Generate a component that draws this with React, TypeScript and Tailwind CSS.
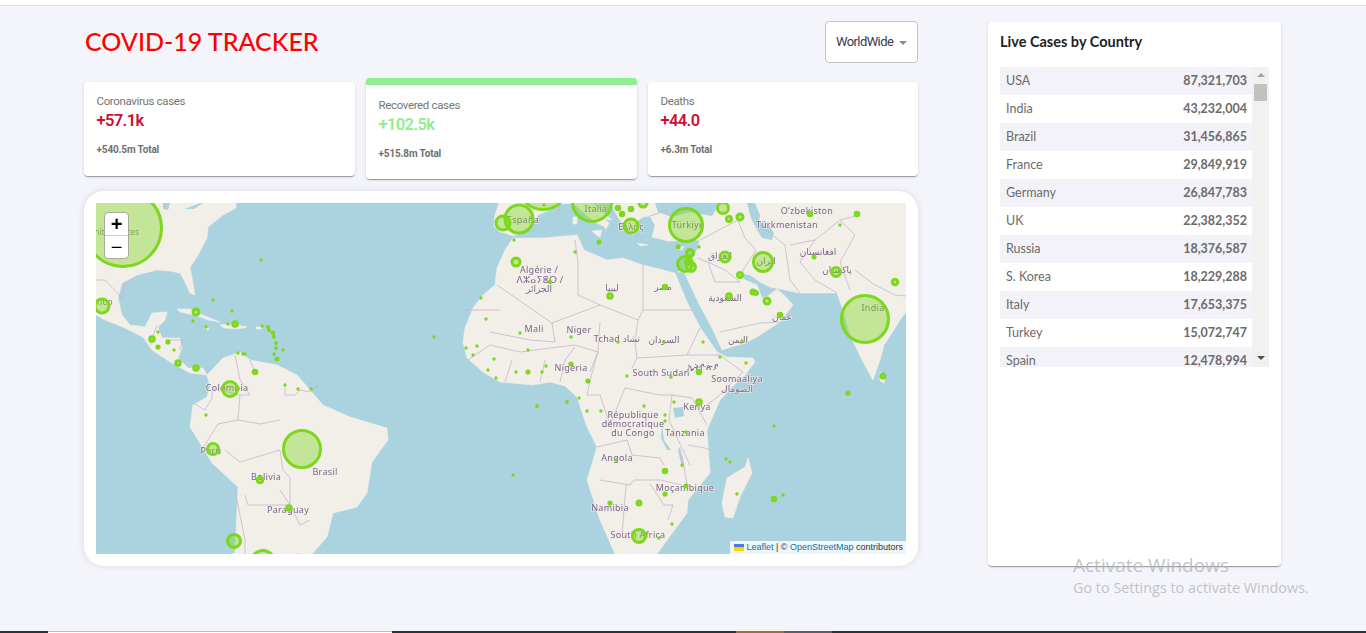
import React from "react";

const cardShadow = "shadow-[0_2px_1px_-1px_rgba(0,0,0,0.2),0_1px_1px_0_rgba(0,0,0,0.14),0_1px_3px_0_rgba(0,0,0,0.12)]";

const rows: [string, string][] = [
  ["USA", "87,321,703"], ["India", "43,232,004"], ["Brazil", "31,456,865"], ["France", "29,849,919"],
  ["Germany", "26,847,783"], ["UK", "22,382,352"], ["Russia", "18,376,587"], ["S. Korea", "18,229,288"],
  ["Italy", "17,653,375"], ["Turkey", "15,072,747"], ["Spain", "12,478,994"],
];

// x, y, outer radius
const rings: [number, number, number][] = [
  [123,228,40],[102,306,8.5],[196,312,4.5],[235,324,3.8],[152,339,3.8],[178,363,3.8],[196,368,3.8],[255,372,3.3],
  [230,389,9],[213,449,7],[302,449,20],[260,480,4.3],[289,508,3.8],[234,541,8],[263,562,13],[298,558,4.5],
  [503,223,8.5],[519,219,15.5],[543,184,27],[592,202,21],[631,226,8.5],[618,208,3.3],[622,214,3.3],[631,209,3.3],[643,203,5.5],[627,199,4],
  [516,262,5.5],[610,296,3.8],[665,287,3.3],[686,225,18],[690,253,5],[685,264,9],[688,262,4],[691,267,6],
  [723,208,7],[729,219,4],[740,217,4.5],[725,257,6.5],[763,262,11],[740,275,4],[753,292,3.5],[756,293,3],[767,301,4.5],[729,296,3.8],[780,315,3.3],
  [810,214,3.3],[857,214,3.3],[836,272,6],[895,282,4.3],[865,319,25],[883,376,3.5],[699,372,3.3],[699,402,3.8],[665,471,3.3],[639,503,3.5],[639,536,8],[774,499,3.3],
];

const dots: [number, number, number][] = [
  [261,260,1.7],[213,300,1.7],[232,311,1.7],[193,321,1.7],[206,327,1.7],[228,324,1.7],[158,332,1.7],[174,350,1.7],[168,342,2.6],[158,347,2.6],
  [262,326,1.8],[268,327,2],[269,330,2],[273,333,2.4],[274,337,1.9],[276,343,1.9],[276,348,1.9],[283,350,1.7],[274,354,1.7],[277,359,2.6],
  [238,353,1.7],[243,354,1.8],[245,354,1.8],[434,337,1.7],[481,298,1.7],[486,319,1.7],[466,348,1.7],[477,346,1.7],[473,355,1.7],[494,359,1.7],[488,370,1.7],[496,378,1.7],
  [285,385,1.7],[298,389,1.7],[311,389,1.7],[206,415,1.7],[514,240,1.7],[575,252,1.7],[599,242,2.6],[550,282,2.2],[544,205,1.7],
  [678,247,2.5],[699,247,1.7],[840,225,1.7],[814,257,2.5],[520,333,1.7],[571,337,1.7],[618,342,1.7],[664,342,1.7],[703,342,1.7],[742,341,1.7],
  [528,350,1.7],[516,372,1.7],[528,372,2.6],[542,372,1.7],[546,366,1.7],[571,364,2.6],[588,381,2.6],[627,376,1.7],[671,377,1.7],[720,357,1.7],[746,363,1.7],
  [848,393,2.6],[774,426,1.7],[537,406,1.9],[567,402,1.9],[579,398,1.7],[587,411,1.7],[601,411,1.7],[644,406,1.7],[674,402,1.7],[665,415,1.7],[665,421,1.7],[686,432,1.7],
  [616,460,1.7],[682,465,1.7],[686,486,2.6],[665,494,2.6],[610,503,2.6],[672,524,1.7],[659,538,1.7],[783,495,1.7],[737,494,1.7],[726,459,1.7],[730,462,1.7],[513,475,1.7],
];

const labels: [string, number, number][] = [
  ["Colombia",227,389],["Perú",211,452],["Bolivia",266,478],["Paraguay",288,511],["Brasil",325,473],
  ["Algérie /",539,271],["ⴷⵣⴰⵢⴻⵔ /",540,281],["الجزائر",539,290],["ليبيا",612,289],["مصر",663,288],["السعودية",725,299],
  ["العراق",720,257],["ایران",766,262],["افغانستان",818,253],["پاکستان",837,271],["عمان",782,318],["اليمن",738,341],
  ["India",873,309],["Türkiye",688,226],["Ελλάς",631,228],["España",523,221],["Italia",596,210],
  ["O‘zbekiston",807,212],["Türkmenistan",787,226],["Mali",534,330],["Niger",579,331],["Tchad تشاد",617,340],["السودان",664,341],
  ["Nigeria",571,369],["South Sudan",661,374],["ኢትዮጵያ",703,368],["Soomaaliya",737,380],["الصومال",737,390],["Kenya",697,408],
  ["République",633,416],["démocratique",633,425],["du Congo",633,434],["Tanzania",685,434],["Angola",617,459],
  ["Moçambique",685,489],["Namibia",610,509],["South Africa",638,536],
];

const land = [
  "M96 203L236 203L236 208L223 215L208 227L207 238L197 257L190 267L192 278L195 295L190 293L185 282L180 273L170 271L157 270L137 275L122 283L118 298L122 315L130 325L145 327L152 313L167 312L165 320L158 327L162 338L180 338L182 348L178 358L188 368L203 368L207 375L210 387L207 397L193 405L190 427L203 448L212 463L238 487L235 553L232 554L312 554L327 537L333 513L357 507L367 493L372 462L388 440L387 428L350 417L323 405L297 375L277 365L250 360L240 352L223 358L207 375L190 373L170 362L152 350L143 337L125 328L105 320L96 315Z",
  "M513 238L543 238L577 235L584 250L607 260L623 258L643 265L675 273L687 302L700 327L717 352L727 357L753 358L755 362L745 375L733 386L720 400L707 430L710 473L688 500L687 513L657 554L615 554L600 520L587 480L590 470L597 447L587 427L577 397L565 386L550 382L533 385L500 382L483 372L467 358L463 342L465 328L473 308L483 295L495 285L497 268L505 250Z",
  "M499 203L495 215L494 226L500 232L505 233L513 236L527 231L533 224L538 215L550 210L560 204L573 203L585 214L595 222L603 226L606 229L609 223L604 219L612 220L600 210L592 203L610 203L618 217L625 228L632 235L637 232L636 222L643 217L650 216L655 225L652 237L668 241L680 241L700 240L697 250L693 258L688 268L678 272L684 272L700 306L713 330L722 350L745 343L757 337L780 322L793 305L785 296L777 289L768 296L762 298L757 285L745 280L738 272L750 275L760 282L770 287L785 290L800 293L820 293L837 293L843 310L850 335L862 360L873 380L880 360L884 345L892 333L900 320L906 312L906 203Z",
  "M748 458L752 473L740 497L733 518L725 517L722 503L727 478L745 467Z",
  "M177 309L190 309L205 316L220 322L208 320L195 315L180 312Z",
  "M220 325L233 324L247 327L238 329L224 328Z",
  "M592 231L602 230L600 237L596 235Z","M573 217L577 217L577 224L573 224Z","M637 243L648 245L640 246Z","M676 249L684 246L682 250Z",
  "M204 328L209 328L208 330Z","M256 327L262 327L261 329L256 329Z","M880 372L885 377L884 383L880 381Z",
];

const water = [
  "M655 203L658 212L672 217L690 212L712 216L720 203Z",
  "M747 203L755 203L760 215L759 222L767 222L774 233L772 240L762 238L756 228L751 218Z",
  "M163 203L170 203L168 210L163 209Z","M184 209L190 207L200 203L203 203L194 209Z",
  "M673 408L683 407L684 416L675 418Z","M662 425L664 440L671 450L667 450L661 438Z","M680 447L684 466L682 468L678 450Z",
];

const borders = [
  "M497 285L552 323L600 305L578 295L578 262L575 240","M600 305L638 320L643 310L643 263","M643 310L693 310","M638 320L635 342L637 358L632 368",
  "M600 322L598 352L590 372","M552 323L555 342L530 340L490 332","M637 358L687 355L700 328","M687 355L720 355L743 372L720 395L707 405",
  "M720 332L760 323L780 322","M740 282L725 270L708 262L697 258","M708 262L715 282L740 282","M740 275L756 250L745 238L738 220L700 240",
  "M760 225L785 245L790 280L800 293","M790 245L815 240L840 220L860 215","M815 240L800 262L815 280L837 293","M840 220L855 235L840 262L850 290",
  "M855 270L875 285L895 295L906 296","M500 310L463 310","M468 360L490 345L520 352L550 348L575 345L598 352","M505 382L512 360","M540 382L545 360",
  "M560 382L565 360L575 347","M598 352L590 380L587 395L600 395L610 425","M610 425L625 388L660 395L672 395","M672 395L669 420L678 440L690 465","M672 395L692 398L707 425",
  "M597 447L627 440L632 455L660 458L664 465","M600 480L630 485L634 480L660 480L682 485","M626 485L622 535","M650 484L664 505L673 505L668 520","M688 445L705 448L710 450","M682 455L688 490",
  "M193 403L205 410L212 398L212 388","M212 388L240 395L250 395L240 380L235 355","M240 395L238 420L260 424L280 420","M203 448L218 424L238 420","M225 450L240 462L280 450L283 470L290 478L290 505",
  "M245 495L248 505L290 505L300 525L310 520","M235 490L245 540L245 554","M285 385L285 395L295 395L300 390L310 392L318 385","M255 372L250 360","M290 505L280 490",
  "M96 280L105 280L122 298L125 283","M157 325L150 345","M165 340L182 340L180 350","M558 215L560 203","M610 203L620 203","M650 216L668 210",
];

function MapArt() {
  return (
    <svg viewBox="96 203 810 351" className="block h-full w-full">
      <rect x="96" y="203" width="810" height="351" fill="#aad3df" />
      <g className="blur-[0.5px]">
        {land.map((d, i) => <path key={i} d={d} fill="#f2efe9" stroke="#f2efe9" strokeWidth="0.6" strokeLinejoin="round" />)}
        {water.map((d, i) => <path key={i} d={d} fill="#aad3df" />)}
        {borders.map((d, i) => <path key={i} d={d} fill="none" stroke="#c6b4cc" strokeWidth="0.8" />)}
        <text x="139" y="233" textAnchor="end" dominantBaseline="middle" fontSize="8" fill="#8a7d8c" fontFamily='"Noto Sans","DejaVu Sans",sans-serif'>United States</text>
        <text x="113" y="303" textAnchor="end" dominantBaseline="middle" fontSize="9" fill="#8a7d8c" fontFamily='"Noto Sans","DejaVu Sans",sans-serif' letterSpacing="0.3">México</text>
        {labels.map(([t, x, y]) => (
          <text key={t} x={x} y={y} textAnchor="middle" dominantBaseline="middle" fontSize="9" fill="#7d6588" fontFamily='"Noto Sans","DejaVu Sans",sans-serif' letterSpacing="0.3" stroke="#f2efe9" strokeOpacity="0.7" strokeWidth="1.5" paintOrder="stroke">{t}</text>
        ))}
      </g>
      {rings.map(([x, y, r], i) => (
        <circle key={i} cx={x} cy={y} r={r - 1.5} fill="#7dd71d" fillOpacity="0.4" stroke="#7dd71d" strokeWidth="3" />
      ))}
      {dots.map(([x, y, r], i) => <circle key={i} cx={x} cy={y} r={r} fill="#7dd71d" />)}
    </svg>
  );
}

function StatCard({ title, value, total, active, width }: { title: string; value: string; total: string; active?: boolean; width: string }) {
  return (
    <div className={`${width} shrink-0 rounded-[4px] bg-white ${cardShadow} ${active ? "h-[101px] border-t-[7px] border-[#90ee90]" : "mt-[4px] h-[94px]"}`}>
      <div className={`pl-[12.5px] font-['Roboto',sans-serif] ${active ? "pt-[13px]" : "pt-[12px]"}`}>
        <div className="text-[11.5px] leading-[14px] tracking-[-0.35px] text-[#757575]">{title}</div>
        <div className={`mt-[3px] text-[16.5px] leading-[20px] font-semibold tracking-[-0.6px] ${active ? "text-[#90ee90]" : "text-[#cc1034]"}`}>{value}</div>
        <div className="mt-[12px] text-[10px] leading-[14px] font-bold tracking-[-0.15px] text-[#6f6f6f]">{total}</div>
      </div>
    </div>
  );
}

function ScrollBar() {
  return (
    <div className="flex w-[17px] flex-col items-center bg-[#f1f1f1]">
      <div className="mt-[6px] h-0 w-0 border-x-[4px] border-b-[4px] border-x-transparent border-b-[#a3a3a3]" />
      <div className="mt-[7px] h-[17px] w-[13px] bg-[#c1c1c1]" />
      <div className="mt-auto mb-[7px] h-0 w-0 border-x-[4px] border-t-[4px] border-x-transparent border-t-[#505050]" />
    </div>
  );
}

export default function App() {
  return (
    <div className="relative flex h-[633px] w-[1366px] flex-col overflow-hidden bg-[#f4f5fa]">
      <div className="h-[6px] border-b border-[#dcdce2] bg-white" />
      <div className="flex flex-1 pt-[15px] pl-[84px]">
        <div className="flex w-[834px] flex-col">
          <div className="flex h-[42px] items-center justify-between">
            <h1 className="pl-[1px] font-['Lato',sans-serif] text-[25px] font-medium text-[#ff0000]">COVID-19 TRACKER</h1>
            <div className="flex h-[42px] w-[93px] items-center rounded-[4px] border border-[#c4c4c4] bg-white pl-[10px]">
              <span className="font-['Roboto',sans-serif] text-[13px] tracking-[-0.6px] text-[#3a3a4a]">WorldWide</span>
              <span className="mt-[1px] ml-[6px] h-0 w-0 border-x-[4px] border-t-[4px] border-x-transparent border-t-[#8a8a8a]" />
            </div>
          </div>
          <div className="mt-[15px] flex h-[101px] gap-[11px]">
            <StatCard width="w-[271px]" title="Coronavirus cases" value="+57.1k" total="+540.5m Total" />
            <StatCard width="w-[271px]" title="Recovered cases" value="+102.5k" total="+515.8m Total" active />
            <StatCard width="w-[270px]" title="Deaths" value="+44.0" total="+6.3m Total" />
          </div>
          <div className="mt-[12px] h-[375px] rounded-[20px] bg-white p-[12px] shadow-[0_0_8px_-1px_rgba(0,0,0,0.15)]">
            <div className="relative h-[351px] overflow-hidden">
              <MapArt />
              <div className="absolute top-[9px] left-[8px] w-[25px] overflow-hidden rounded-[4px] border border-[#aaa99a] bg-white font-['Liberation_Sans',sans-serif] text-black">
                <div className="flex h-[23px] items-center justify-center border-b border-[#ccc] text-[20px] leading-none font-bold">+</div>
                <div className="flex h-[22px] items-center justify-center text-[20px] leading-none">−</div>
              </div>
              <div className="absolute right-0 bottom-0 flex h-[13px] items-center bg-white/80 pr-[3px] pl-[4px] font-['Liberation_Sans',sans-serif] text-[9px] leading-none text-[#333]">
                <svg width="10" height="7" viewBox="0 0 10 7" className="mr-[1px]"><rect width="10" height="3.5" fill="#4c7be1" /><rect y="3.5" width="10" height="3.5" fill="#ffd500" /></svg>
                <span className="ml-[1px] text-[#0078a8]">Leaflet</span>
                <span className="mx-[2.5px]">|</span>
                <span>©&nbsp;</span>
                <span className="text-[#0078a8]">OpenStreetMap</span>
                <span>&nbsp;contributors</span>
              </div>
            </div>
          </div>
        </div>
        <div className={`mt-[1px] ml-[70px] h-[544px] w-[293px] rounded-[4px] bg-white px-[12px] ${cardShadow}`}>
          <h2 className="mt-[12px] font-['Lato',sans-serif] text-[14.5px] leading-[16px] font-bold text-[#222]">Live Cases by Country</h2>
          <div className="mt-[17px] flex h-[300px] w-[269px] overflow-hidden">
            <div className="w-[252px]">
              {rows.map(([c, v], i) => (
                <div key={c} className={`flex h-[28px] shrink-0 items-center justify-between pr-[5px] pl-[6px] font-['Lato',sans-serif] text-[12.5px] ${i % 2 === 0 ? "bg-[#f3f2f8]" : "bg-white"}`}>
                  <span className="text-[#6b6b6b]">{c}</span>
                  <span className="font-bold text-[#6b6b6b]">{v}</span>
                </div>
              ))}
            </div>
            <ScrollBar />
          </div>
        </div>
      </div>
      <div className="flex h-[2px] w-full bg-[#263238]">
        <div className="ml-[48px] h-[2px] w-[344px] border-t border-[#bdbdbd] bg-white" />
        <div className="ml-[344px] h-[2px] w-[48px] bg-[#a96b2f]" />
        <div className="h-[2px] w-[48px] bg-[#5a6068]" />
      </div>
      <div className="pointer-events-none absolute top-[553px] left-[1073px] font-['Open_Sans',sans-serif] text-[#b4b4b8]/80">
        <div className="text-[19px] leading-[24px]">Activate Windows</div>
        <div className="mt-[1px] text-[14.4px] leading-[20px]">Go to Settings to activate Windows.</div>
      </div>
    </div>
  );
}
